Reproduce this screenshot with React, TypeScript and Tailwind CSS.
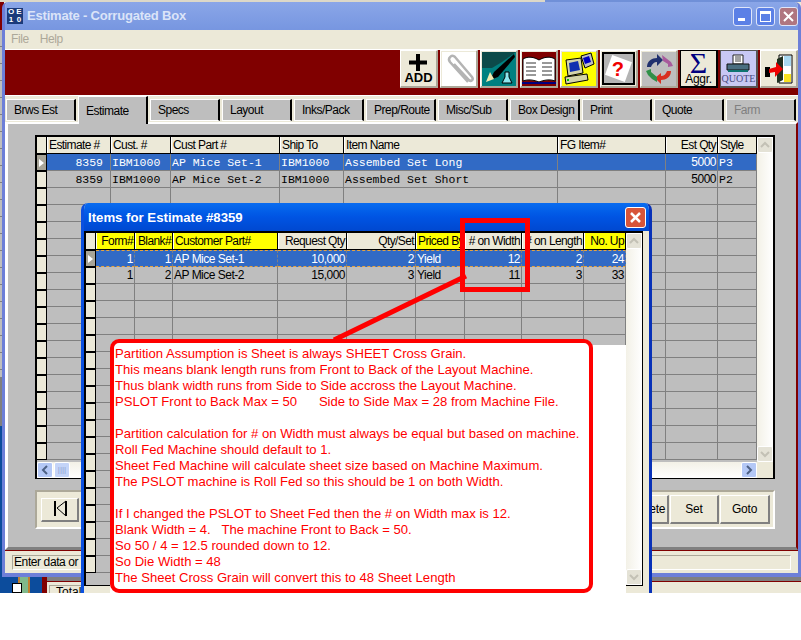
const uiFont = "font-['Liberation_Sans',Arial,sans-serif]";

type Col = { label: string; w: number; yellow?: boolean; right?: boolean; mono?: boolean; headLeft?: boolean };

const mainCols: Col[] = [
  { label: "Estimate #", w: 64, right: true, mono: true, headLeft: true },
  { label: "Cust. #", w: 60, mono: true },
  { label: "Cust Part #", w: 109, mono: true },
  { label: "Ship To", w: 64, mono: true },
  { label: "Item Name", w: 214, mono: true },
  { label: "FG Item#", w: 108, mono: true },
  { label: "Est Qty", w: 52, right: true },
  { label: "Style", w: 39, mono: true },
];

const mainRows = [
  ["8359", "IBM1000", "AP Mice Set-1", "IBM1000", "Assembed Set Long", "", "5000", "P3"],
  ["8359", "IBM1000", "AP Mice Set-2", "IBM1000", "Assembed Set Short", "", "5000", "P2"],
];

const itemCols: Col[] = [
  { label: "Form#", w: 39, yellow: true, right: true },
  { label: "Blank#", w: 38, yellow: true, right: true },
  { label: "Customer Part#", w: 105, yellow: true },
  { label: "Request Qty", w: 69, right: true },
  { label: "Qty/Set", w: 69, right: true },
  { label: "Priced By", w: 49, yellow: true },
  { label: "# on Width", w: 57, right: true },
  { label: "# on Length", w: 62, right: true },
  { label: "No. Up", w: 42, yellow: true, right: true },
];

const itemRows = [
  ["1", "1", "AP Mice Set-1", "10,000", "2", "Yield", "12", "2", "24"],
  ["1", "2", "AP Mice Set-2", "15,000", "3", "Yield", "11", "3", "33"],
];

const notes = [
  "Partition Assumption is Sheet is always SHEET Cross Grain.",
  "This means blank length runs from Front to Back of the Layout Machine.",
  "Thus blank width runs from Side to Side accross the Layout Machine.",
  "PSLOT Front to Back Max = 50      Side to Side Max = 28 from Machine File.",
  "",
  "Partition calculation for # on Width must always be equal but based on machine.",
  "Roll Fed Machine should default to 1.",
  "Sheet Fed Machine will calculate sheet size based on Machine Maximum.",
  "The PSLOT machine is Roll Fed so this should be 1 on both Width.",
  "",
  "If I changed the PSLOT to Sheet Fed then the # on Width max is 12.",
  "Blank Width = 4.   The machine Front to Back = 50.",
  "So 50 / 4 = 12.5 rounded down to 12.",
  "So Die Width = 48",
  "The Sheet Cross Grain will convert this to 48 Sheet Length",
];

const tabs = ["Brws Est", "Estimate", "Specs", "Layout", "Inks/Pack", "Prep/Route", "Misc/Sub", "Box Design", "Print", "Quote", "Farm"];

function Grid({ cols, rows, rowCount, height, dashed }: { cols: Col[]; rows: string[][]; rowCount: number; height: number; dashed?: boolean }) {
  const total = cols.reduce((n, c) => n + c.w, 0);
  return (
    <div className="flex-1 min-w-0 overflow-hidden bg-[#bebebe]" style={{ height }}>
      <div className="flex h-[17px] border-b border-black bg-black" style={{ width: total + 10 }}>
        <div className="w-[10px] h-[16px] bg-[#ece9d8] border-r border-black" />
        {cols.map((c) => (
          <div
            key={c.label}
            style={{ width: c.w }}
            className={`h-[16px] px-[1px] border-r border-black border-l border-l-white text-[12px] leading-[16px] tracking-[-0.6px] whitespace-nowrap overflow-hidden text-black ${c.yellow ? "bg-[#ffff00]" : "bg-[#ece9d8]"} ${c.right && !c.headLeft ? "text-right" : ""}`}
          >
            {c.label}
          </div>
        ))}
      </div>
      {Array.from({ length: rowCount }).map((_, r) => {
        const row = rows[r];
        const selected = r === 0;
        return (
          <div key={r} className={`flex h-[17px] ${selected ? "bg-[#316ac5] text-white" : "text-black"}`} style={{ width: total + 10 }}>
            <div className={`w-[10px] h-[17px] border-y border-r border-black flex items-center justify-center ${selected ? "bg-[#a8a598]" : "bg-[#ece9d8]"}`}>
              {selected && <div className="w-0 h-0 border-y-[4px] border-y-transparent border-l-[5px] border-l-white" />}
            </div>
            {cols.map((c, i) => (
              <div
                key={c.label}
                style={{ width: c.w }}
                className={`h-[17px] border-r border-b border-[#808080] px-[1px] whitespace-nowrap overflow-hidden ${c.right ? "text-right" : ""} ${c.mono ? "font-['Liberation_Mono',monospace] text-[11.500px] leading-[17px]" : "text-[12px] leading-[16px] tracking-[-0.5px]"} ${selected && dashed ? "border-t border-t-[#e8a33d] border-dashed border-b-[#e8a33d]" : ""}`}
              >
                {c.right && c.mono ? <span className="pr-[6px]">{row?.[i]}</span> : row?.[i]}
              </div>
            ))}
          </div>
        );
      })}
    </div>
  );
}

function ScrollArrow({ dir }: { dir: "up" | "down" | "left" | "right" }) {
  const pts = { up: "3,9 7,5 11,9", down: "3,5 7,9 11,5", left: "9,3 5,7 9,11", right: "5,3 9,7 5,11" }[dir];
  const side = dir === "left" || dir === "right";
  return (
    <div className={`w-[16px] h-[16px] shrink-0 rounded-[2px] border border-white flex items-center justify-center ${side ? "bg-[#b4c8f6]" : "bg-[#e4e2d6]"}`}>
      <svg width="14" height="14" viewBox="0 0 14 14">
        <polyline points={pts} fill="none" stroke={side ? "#4d6185" : "#c3c1b5"} strokeWidth="2" />
      </svg>
    </div>
  );
}

function VScroll() {
  return (
    <div className="w-[16px] flex flex-col justify-between bg-gradient-to-r from-[#f3f1e7] to-white">
      <ScrollArrow dir="up" />
      <ScrollArrow dir="down" />
    </div>
  );
}

function ToolButton({ children, className = "" }: { children: React.ReactNode; className?: string }) {
  return (
    <div className={`w-[38px] h-[38px] shrink-0 bg-[#ece9d8] border-t border-l border-white border-r-2 border-b-2 border-r-[#aca899] border-b-[#aca899] flex items-center justify-center overflow-hidden ${className}`}>
      {children}
    </div>
  );
}

function ToolBar() {
  return (
    <div className="h-[46px] shrink-0 bg-[#800000] flex justify-end gap-[2px] border-b border-white">
      <ToolButton>
        <div className="flex flex-col items-center">
          <svg width="20" height="17" viewBox="0 0 20 17">
            <path d="M8 0h4v6.500h7v4h-7V17H8v-6.500H1v-4h7z" fill="#000" />
          </svg>
          <span className="text-[13px] leading-[13px] font-bold text-black">ADD</span>
        </div>
      </ToolButton>
      <ToolButton>
        <svg width="34" height="34" viewBox="0 0 34 34" className="bg-white">
          <path d="M26 30 8 10c-3-4 2-8 5-5l17 20c2 3-1 5-3 3L12 12" fill="none" stroke="#b4b4b4" strokeWidth="2.500" />
        </svg>
      </ToolButton>
      <ToolButton>
        <svg width="34" height="34" viewBox="0 0 34 34">
          <rect width="34" height="34" fill="#008080" />
          <path d="M0 0h34L20 10 10 16H0z" fill="#0c4a4a" />
          <path d="M32 2 12 20l-4 8 8-3L33 5z" fill="#000" />
          <path d="M4 30l8-3-4-7z" fill="#f2e9b0" />
          <path d="M20 31l3-6v-5h4v5l3 6z" fill="#8ee8f0" stroke="#000" />
        </svg>
      </ToolButton>
      <ToolButton>
        <svg width="34" height="34" viewBox="0 0 34 34">
          <rect width="34" height="34" fill="#800000" />
          <path d="M1 7c5-3 11-2 16 1 5-3 11-4 16-1v22c-5-2-11-1-16 1-5-2-11-3-16-1z" fill="#fff" stroke="#000" />
          <path d="M4 11h10M4 15h10M4 19h10M4 23h10M20 11h10M20 15h10M20 19h10M20 23h10" stroke="#333" strokeWidth="1" />
          <rect y="30" width="34" height="2" fill="#000080" />
        </svg>
      </ToolButton>
      <ToolButton>
        <svg width="34" height="34" viewBox="0 0 34 34">
          <rect width="34" height="34" fill="#ffff00" />
          <path d="M19 4l10-3 3 11-9 4z" fill="#c0c0c0" stroke="#000" />
          <path d="M21 6l6-2 2 6-6 2z" fill="#0000c0" />
          <path d="M4 8l15-2 2 15-15 3z" fill="#d4d4a8" stroke="#000" />
          <path d="M7 11l9-2 2 9-10 2z" fill="#1030b0" />
          <path d="M3 25l22-3 1 6-22 4z" fill="#d4d4a8" stroke="#000" />
          <rect x="5" y="27" width="2" height="2" fill="#00c000" />
        </svg>
      </ToolButton>
      <ToolButton>
        <div className="w-[33px] h-[33px] bg-[#b4b4b4] border-2 border-black flex items-center justify-center">
          <div className="w-[21px] h-[21px] bg-white rotate-[20deg] flex items-center justify-center">
            <span className="-rotate-[20deg] text-[20px] leading-none font-bold text-[#f00000]">?</span>
          </div>
        </div>
      </ToolButton>
      <ToolButton>
        <svg width="34" height="34" viewBox="0 0 34 34">
          <rect width="34" height="34" fill="#bebebe" />
          <path d="M5 15c0-6 5-9 10-9V2l6 6-6 6v-4c-3 0-5 2-6 5z" fill="#20306e" />
          <path d="M20 3l9 7 2 4-5 1v-3l-5-3z" fill="#a85a9c" />
          <path d="M29 19c0 6-5 9-10 9v4l-6-6 6-5v3c3 0 5-2 6-5z" fill="#d83020" />
          <path d="M4 19l5-2v3l6 5 0 5-5-3-4-4z" fill="#309048" />
        </svg>
      </ToolButton>
      <ToolButton className="border-2 !border-black">
        <div className="flex flex-col items-center">
          <span className="font-['Liberation_Serif',serif] text-[30px] leading-[21px] text-[#000080]">Σ</span>
          <span className="text-[12px] leading-[12px] tracking-[-0.3px] text-black">Aggr.</span>
        </div>
      </ToolButton>
      <ToolButton className="!bg-[#c8c8f4] border-2 !border-[#555]">
        <div className="flex flex-col items-center">
          <svg width="26" height="20" viewBox="0 0 26 20">
            <path d="M8 1h10v9H8z" fill="#fff" stroke="#222" />
            <path d="M10 3h6M10 5h6M10 7h6" stroke="#444" />
            <path d="M2 10h22v6H2z" fill="#4a6e80" stroke="#111" />
            <path d="M3 16h20v2H3z" fill="#0e7470" />
          </svg>
          <span className="font-['Liberation_Serif',serif] text-[10px] leading-[10px] text-[#4a4a80]">QUOTE</span>
        </div>
      </ToolButton>
      <ToolButton>
        <svg width="34" height="34" viewBox="0 0 34 34">
          <path d="M17 3h13v28H17z" fill="#fff" stroke="#000" />
          <path d="M22 4h7v10h-7z" fill="#a8d8f0" />
          <path d="M22 22h7v8h-7z" fill="#f8e020" />
          <path d="M15 7l6-3v24l-6 3z" fill="#203020" />
          <path d="M3 15h5v10H3z" fill="#000" />
          <path d="M7 17l7-2v-5l7 7-8 8v-5l-6 1z" fill="#f00000" />
        </svg>
      </ToolButton>
    </div>
  );
}

function MainWindow() {
  return (
    <div className="absolute left-[2px] top-[2px] w-[799px] h-[575px] bg-[#ece9d8] border-x-[3px] border-b-[4px] border-[#6d7fd8] rounded-t-[6px] flex flex-col overflow-hidden">
      <div className="h-[28px] shrink-0 bg-gradient-to-b from-[#8aa6e8] to-[#7796e0] flex items-center pl-[2px]">
        <div className="w-[16px] h-[16px] grid grid-cols-2 bg-[#1b3a7a] text-white text-[8px] leading-[8px] text-center font-bold mr-[4px]">
          <span>O</span>
          <span>E</span>
          <span>1</span>
          <span>0</span>
        </div>
        <span className="font-bold text-[13px] tracking-[-0.2px] text-[#dbe4f8]">Estimate - Corrugated Box</span>
        <div className="ml-auto flex gap-[4px]">
          <div className="w-[19px] h-[19px] rounded-[3px] border border-[#dfe6fa] bg-[#5b80e6] flex items-end pl-[4px] pb-[4px]">
            <div className="w-[7px] h-[3px] bg-white" />
          </div>
          <div className="w-[19px] h-[19px] rounded-[3px] border border-[#dfe6fa] bg-[#5b80e6] flex items-center justify-center">
            <div className="w-[11px] h-[11px] border border-t-[3px] border-white" />
          </div>
          <div className="w-[19px] h-[19px] rounded-[3px] border border-[#dfe6fa] bg-[#b07680] flex items-center justify-center">
            <svg width="13" height="13" viewBox="0 0 13 13">
              <path d="M2 2l9 9M11 2l-9 9" stroke="#fff" strokeWidth="2" />
            </svg>
          </div>
        </div>
      </div>
      <div className="h-[19px] shrink-0 flex gap-[11px] pl-[6px] text-[12px] leading-[19px] tracking-[-0.4px] text-[#aca899] border-b border-white box-content">
        <span>File</span>
        <span>Help</span>
      </div>
      <ToolBar />
      <div className="h-[26px] shrink-0 flex gap-[2px] pl-[1px] pt-[3px] bg-[#ece9d8]">
        {tabs.map((t) => (
          <div
            key={t}
            className={`w-[70px] text-[12px] tracking-[-0.5px] whitespace-nowrap pl-[7px] bg-[#bebebe] border-l border-t border-white border-r-2 border-r-black ${t === "Estimate" ? "relative z-10 h-[28px] -mt-[3px] leading-[28px]" : "h-[22px] leading-[21px] border-b border-b-white"} ${t === "Farm" ? "text-[#808080]" : "text-black"}`}
          >
            {t}
          </div>
        ))}
      </div>
      <div className="flex-1 min-h-0 bg-[#bebebe] border-l-[3px] border-t-2 border-white border-b-[3px] border-b-[#808080] border-r-2 border-r-[#800000] pl-[27px] pt-[11px] pr-[23px]">
        <div className="w-[740px] h-[344px] border-t-2 border-l-2 border-r-2 border-b border-black flex flex-col bg-white">
          <div className="flex h-[325px]">
            <Grid cols={mainCols} rows={mainRows} rowCount={18} height={326} />
            <VScroll />
          </div>
          <div className="flex-1 flex items-end bg-gradient-to-b from-[#f3f1e7] to-white">
            <ScrollArrow dir="left" />
            <div className="w-[16px] h-[16px] ml-[1px] rounded-[2px] border border-white bg-[#c4d4f8] flex justify-center items-center text-[#8fa3d0] text-[8px]">||||</div>
            <div className="flex-1" />
            <ScrollArrow dir="right" />
            <div className="w-[16px] h-[16px] bg-[#ece9d8]" />
          </div>
        </div>
        <div className="w-[740px] h-[39px] mt-[11px] border-2 border-[#aca899] border-r-white border-b-white flex items-center justify-between pl-[4px] pr-[3px] bg-[#ece9d8]">
          <div className="w-[38px] h-[24px] border border-white border-r-2 border-b-2 border-r-[#808080] border-b-[#808080] flex items-center justify-center">
            <svg width="18" height="18" viewBox="0 0 18 18">
              <path d="M4 1v15" stroke="#000" strokeWidth="2" />
              <path d="M15 1v15L6 8z" fill="none" stroke="#000" />
              <path d="M15 1v15" stroke="#000" strokeWidth="2" />
            </svg>
          </div>
          <div className="flex gap-[1px] text-[12px] tracking-[-0.2px] text-black">
            <div className="w-[40px] h-[29px] leading-[27px] text-center border border-white border-r-2 border-b-2 border-r-[#808080] border-b-[#808080]">Delete</div>
            <div className="w-[49px] h-[29px] leading-[27px] text-center border border-white border-r-2 border-b-2 border-r-[#808080] border-b-[#808080]">Set</div>
            <div className="w-[50px] h-[29px] leading-[27px] text-center border border-white border-r-2 border-b-2 border-r-[#808080] border-b-[#808080]">Goto</div>
          </div>
        </div>
      </div>
      <div className="h-[23px] shrink-0 px-[7px] pt-[4px] border-t border-[#800000]">
        <div className="h-[15px] border border-[#aca899] border-r-white border-b-white text-[12px] leading-[13px] tracking-[-0.4px] pl-[1px] text-black whitespace-nowrap overflow-hidden">
          Enter data or press F1 for help
        </div>
      </div>
    </div>
  );
}

function ItemsDialog() {
  return (
    <div className="absolute left-[81px] top-[203px] w-[571px] h-[390px] rounded-t-[7px] bg-[#ece9d8] border-x-[3px] border-l-[#0a50e0] border-r-[#0831b8] flex flex-col overflow-hidden">
      <div className="h-[28px] shrink-0 bg-gradient-to-b from-[#0a6cf0] via-[#0054e3] to-[#0048d0] flex items-center -mx-[3px] pl-[7px] pr-[6px]">
        <span className="pt-[1px] font-bold text-[13.200px] text-white">Items for Estimate #8359</span>
        <div className="ml-auto w-[21px] h-[21px] rounded-[3px] border border-white bg-[#d8553a] flex items-center justify-center">
          <svg width="15" height="15" viewBox="0 0 15 15">
            <path d="M3 3l9 9M12 3l-9 9" stroke="#fff" strokeWidth="2.500" />
          </svg>
        </div>
      </div>
      <div className="relative w-[559px] h-[355px] border-t-2 border-l-2 border-black border-r border-b flex">
        <Grid cols={itemCols} rows={itemRows} rowCount={19} height={352} dashed />
        <VScroll />
      </div>
      {/* white paper with the typed note, pasted over the grid */}
      <div className="absolute left-[26px] top-[142px] w-[516px] h-[248px] bg-white" />
      <div className="absolute left-[26px] top-[136px] w-[483px] h-[254px] bg-white border-[4px] border-[#ff0000] rounded-[9px] pl-[1px] pt-[3px]">
        {notes.map((line, i) => (
          <div key={i} className="h-[16px] text-[13.100px] leading-[16px] text-[#ff0000] whitespace-pre">
            {line}
          </div>
        ))}
      </div>
      <div className="absolute left-[376px] top-[15px] w-[70px] h-[74px] border-[5px] border-[#ff0000]" />
      <svg className="absolute left-[247px] top-[70px]" width="140" height="70" viewBox="0 0 140 70">
        <path d="M135 3 3 67" stroke="#ff0000" strokeWidth="5" />
      </svg>
    </div>
  );
}

export default function App() {
  return (
    <div className={`relative w-[801px] h-[640px] bg-white overflow-hidden ${uiFont}`}>
      {/* desktop and windows showing behind the main window */}
      <div className="absolute left-0 top-0 w-[801px] h-[593px] bg-[#ece9d8]">
        <div className="absolute left-0 top-0 w-[545px] h-[2px] bg-[#dcd8c8]" />
        <div className="absolute left-[545px] top-0 w-[256px] h-[2px] bg-[#7090d8]" />
        <div className="absolute left-0 top-[2px] w-[4px] h-[28px] bg-[#800000]" />
        <div className="absolute left-0 top-[30px] w-[4px] h-[347px] bg-[repeating-linear-gradient(#bebebe_0,#bebebe_16px,#808080_16px,#808080_17px)]" />
        <div className="absolute left-0 top-[377px] w-[4px] h-[49px] bg-[#808080]" />
        <div className="absolute left-0 top-[426px] w-[4px] h-[167px] bg-[#0c4c9c]" />
        <div className="absolute left-0 top-[577px] w-[42px] h-[16px] bg-[#0c4c9c]">
          <div className="absolute left-[18px] top-0 w-[12px] h-[16px] bg-[#7fb88a] border-x-2 border-[#c08030]" />
          <div className="absolute left-[12px] top-[6px] w-[10px] h-[10px] bg-white border border-black" />
        </div>
        <div className="absolute left-[42px] top-[577px] w-[759px] h-[4px] bg-[#808080]" />
        <div className="absolute left-[42px] top-[581px] w-[759px] h-[1px] bg-[#800000]" />
        <div className="absolute left-[42px] top-[577px] w-[5px] h-[16px] bg-[#800000]" />
        <div className="absolute left-[49px] top-[585px] w-[32px] h-[8px] border-l border-t border-[#aca899] text-[12px] leading-[12px] pl-[6px] overflow-hidden text-black">Total</div>
      </div>
      <MainWindow />
      <ItemsDialog />
    </div>
  );
}
